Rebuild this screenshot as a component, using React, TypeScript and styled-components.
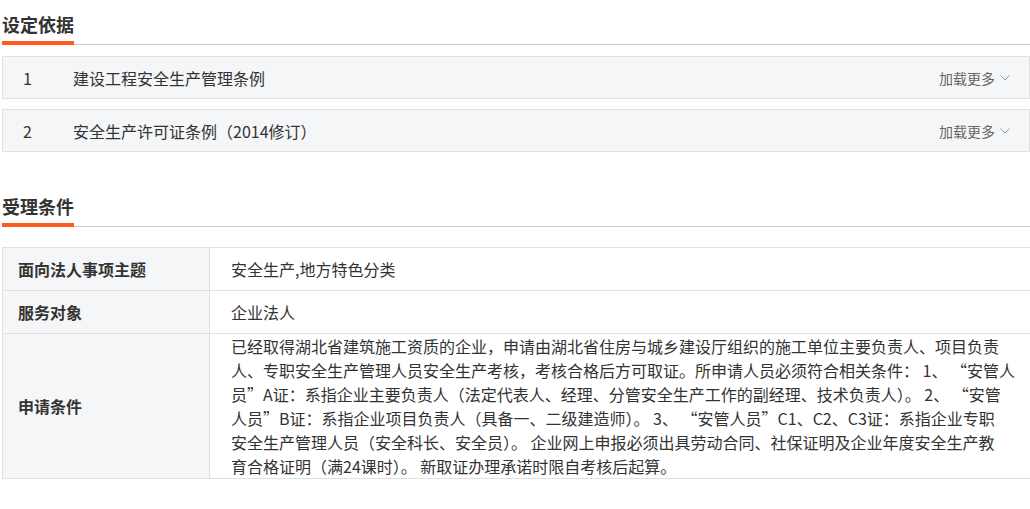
import React from "react";
import styled, { createGlobalStyle } from "styled-components";

const GlobalStyle = createGlobalStyle`
  html, body {
    margin: 0;
    padding: 0;
    background: #fff;
    overflow: hidden;
  }
  body {
    font-family: "Noto Sans CJK SC", "Noto Sans", sans-serif;
    color: #333;
  }
`;

// 页面容器
const Page = styled.div`
  width: 1028px;
  padding-left: 2px;
`;

const Section = styled.section<{ $gap?: number }>`
  margin-top: ${(p) => p.$gap ?? 0}px;
`;

const SectionHeader = styled.div`
  display: flex;
  padding-top: 12px;
  border-bottom: 1px solid #c9cacd;
`;

const SectionTitle = styled.span`
  font-size: 18px;
  font-weight: 700;
  line-height: 24px;
  color: #333;
  padding-bottom: 5px;
  margin-bottom: -1px;
  border-bottom: 4px solid #ff5a1f;
`;

const BasisList = styled.div`
  margin-top: 11px;
  display: flex;
  flex-direction: column;
  gap: 10px;
`;

const BasisRow = styled.div`
  display: flex;
  align-items: center;
  height: 43px;
  box-sizing: border-box;
  border: 1px solid #dfe1e5;
  background: #f5f6f8;
  font-size: 16px;
`;

const BasisIndex = styled.span`
  width: 50px;
  padding-left: 20px;
  color: #333;
`;

const BasisName = styled.span`
  flex: 1;
  color: #333;
`;

const MoreButton = styled.span`
  display: flex;
  align-items: center;
  gap: 5px;
  padding-right: 19px;
  font-size: 14px;
  color: #666;
  cursor: pointer;
`;

const CondTable = styled.div`
  margin-top: 20px;
  display: grid;
  grid-template-columns: 207px 1fr;
  border-top: 1px solid #dfe1e5;
  border-left: 1px solid #dfe1e5;
`;

const LabelCell = styled.div<{ $minH?: number }>`
  box-sizing: border-box;
  min-height: ${(p) => p.$minH ?? 43}px;
  display: flex;
  align-items: center;
  padding-left: 15px;
  background: #f5f6f8;
  border-right: 1px solid #dfe1e5;
  border-bottom: 1px solid #dfe1e5;
  font-size: 16px;
  font-weight: 700;
  color: #333;
`;

const ValueCell = styled.div`
  box-sizing: border-box;
  display: flex;
  align-items: center;
  padding: 0 10px 0 21px;
  border-bottom: 1px solid #dfe1e5;
  font-size: 16px;
  line-height: 24px;
  color: #333;
`;

const Paragraph = styled.p`
  margin: 0;
  white-space: nowrap;
`;

const Chevron = () => (
  <svg width="10" height="6" viewBox="0 0 10 6" fill="none">
    <polyline points="0.5,0.5 5,5 9.5,0.5" stroke="#999" strokeWidth="1" />
  </svg>
);

const basisItems = ["建设工程安全生产管理条例", "安全生产许可证条例（2014修订）"];

const conditionLines = [
  "已经取得湖北省建筑施工资质的企业，申请由湖北省住房与城乡建设厅组织的施工单位主要负责人、项目负责",
  "人、专职安全生产管理人员安全生产考核，考核合格后方可取证。所申请人员必须符合相关条件： 1、 “安管人",
  "员”A证：系指企业主要负责人（法定代表人、经理、分管安全生产工作的副经理、技术负责人）。 2、 “安管",
  "人员”B证：系指企业项目负责人（具备一、二级建造师）。 3、 “安管人员”C1、C2、C3证：系指企业专职",
  "安全生产管理人员（安全科长、安全员）。 企业网上申报必须出具劳动合同、社保证明及企业年度安全生产教",
  "育合格证明（满24课时）。 新取证办理承诺时限自考核后起算。",
];

const App: React.FC = () => {
  return (
    <Page>
      <GlobalStyle />
      <Section>
        <SectionHeader>
          <SectionTitle>设定依据</SectionTitle>
        </SectionHeader>
        <BasisList>
          {basisItems.map((name, i) => (
            <BasisRow key={name}>
              <BasisIndex>{i + 1}</BasisIndex>
              <BasisName>{name}</BasisName>
              <MoreButton>
                加载更多
                <Chevron />
              </MoreButton>
            </BasisRow>
          ))}
        </BasisList>
      </Section>

      <Section $gap={30}>
        <SectionHeader>
          <SectionTitle>受理条件</SectionTitle>
        </SectionHeader>
        <CondTable>
          <LabelCell>面向法人事项主题</LabelCell>
          <ValueCell>安全生产,地方特色分类</ValueCell>
          <LabelCell>服务对象</LabelCell>
          <ValueCell>企业法人</ValueCell>
          <LabelCell $minH={145}>申请条件</LabelCell>
          <ValueCell>
            <Paragraph>
              {conditionLines.map((line, i) => (
                <React.Fragment key={i}>
                  {line}
                  {i < conditionLines.length - 1 && <br />}
                </React.Fragment>
              ))}
            </Paragraph>
          </ValueCell>
        </CondTable>
      </Section>
    </Page>
  );
};

export default App;
